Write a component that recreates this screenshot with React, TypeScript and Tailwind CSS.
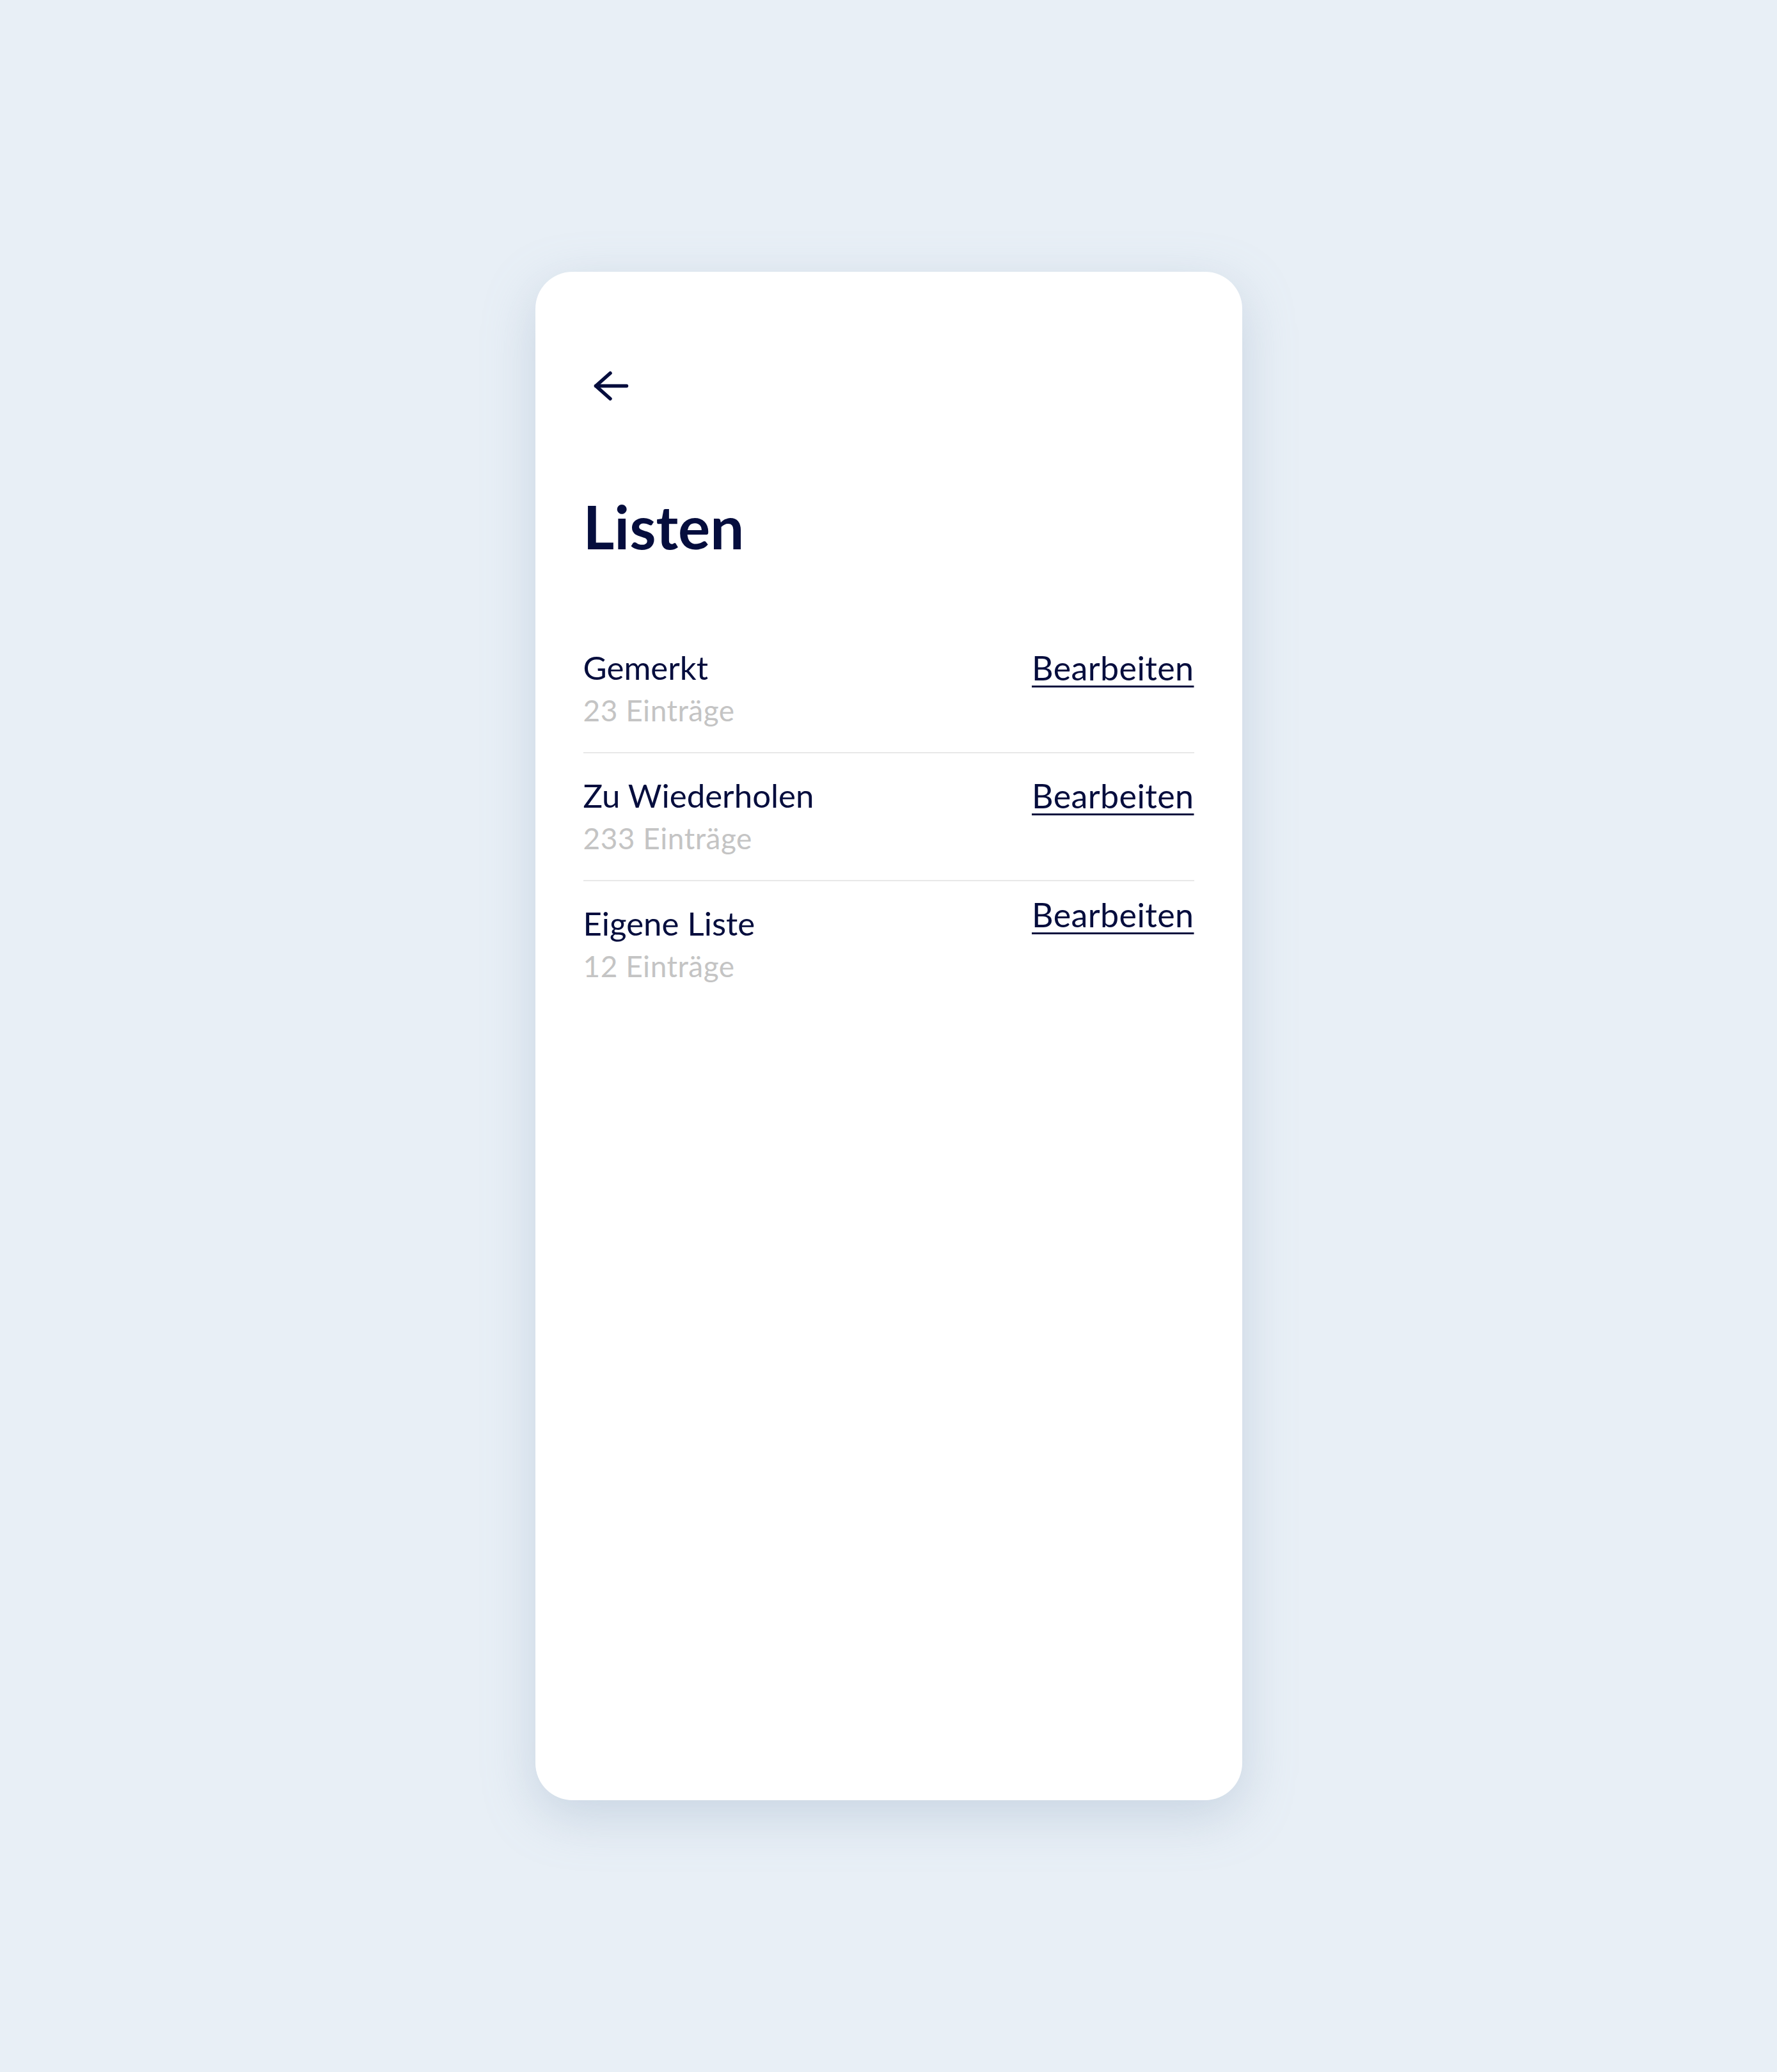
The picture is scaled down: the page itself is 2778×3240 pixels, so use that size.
import type { ReactNode } from "react";

interface ListEntry {
  id: string;
  title: string;
  count: number;
  /** Nudges the edit link up; the last row in the design sits higher. */
  raised?: boolean;
}

const LISTS: ListEntry[] = [
  { id: "saved", title: "Gemerkt", count: 23 },
  { id: "repeat", title: "Zu Wiederholen", count: 233 },
  { id: "custom", title: "Eigene Liste", count: 12, raised: true },
];

function BackArrow() {
  return (
    <svg
      width="60"
      height="52"
      viewBox="0 0 60 52"
      fill="none"
      stroke="#050d3d"
      strokeWidth="5.5"
      strokeLinecap="round"
      strokeLinejoin="round"
      aria-hidden="true"
    >
      <path d="M54.5 26.5H6.5" />
      <path d="M29 6.5L6.5 26.5L29 46.5" />
    </svg>
  );
}

function EditLink({ raised, children }: { raised?: boolean; children: ReactNode }) {
  return (
    <a
      href="#"
      className={
        raised
          ? "-mt-[14px] text-[52px] leading-[68px] tracking-[0.4px] text-[#050d3d] underline decoration-[3px] underline-offset-[8px]"
          : "text-[52px] leading-[68px] tracking-[0.4px] text-[#050d3d] underline decoration-[3px] underline-offset-[8px]"
      }
    >
      {children}
    </a>
  );
}

function ListRow({ entry }: { entry: ListEntry }) {
  return (
    <li className="flex items-start justify-between py-[32px]">
      <div className="flex flex-col">
        <span className="text-[51px] leading-[68px] text-[#050d3d]">{entry.title}</span>
        <span className="text-[46px] leading-[66px] tracking-[0.5px] text-[#c4c4c4]">
          {entry.count} Einträge
        </span>
      </div>
      <EditLink raised={entry.raised}>Bearbeiten</EditLink>
    </li>
  );
}

export default function App() {
  return (
    <div
      className="flex min-h-[3240px] items-center justify-center bg-[#e8eff6]"
      style={{ fontFamily: "Lato, 'Noto Sans', sans-serif" }}
    >
      <div className="flex h-[2390px] w-[1105px] flex-col rounded-[58px] bg-white px-[75px] pt-[152px] shadow-[0_24px_80px_rgba(140,162,190,0.35)]">
        <button type="button" className="ml-[13px] self-start" aria-label="Zurück">
          <BackArrow />
        </button>
        <h1 className="mt-[146px] text-[94px] font-bold leading-[96px] text-[#050d3d]">Listen</h1>
        <ul className="mt-[107px] divide-y-2 divide-[#e8e8e8]">
          {LISTS.map((entry) => (
            <ListRow key={entry.id} entry={entry} />
          ))}
        </ul>
      </div>
    </div>
  );
}
